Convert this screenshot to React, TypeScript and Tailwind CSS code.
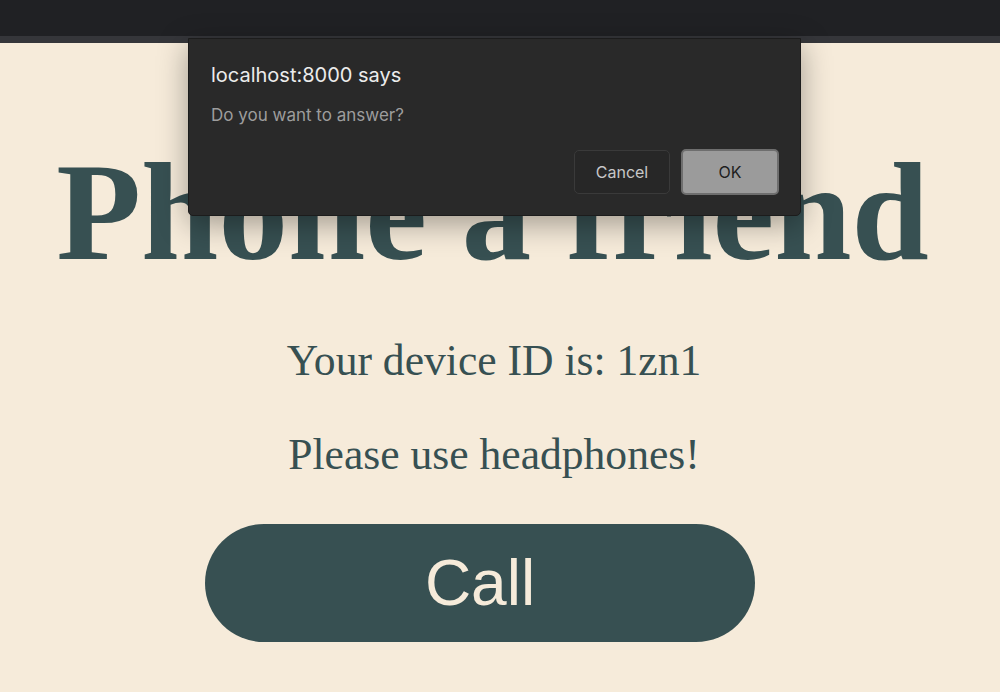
import React from "react";

export default function App() {
  return (
    <div className="relative w-[1000px] h-[692px] overflow-hidden bg-[#f6ebda]">
      <div className="h-[36px] bg-[#202124]" />
      <div className="h-[7px] bg-[#35363a]" />
      <div className="flex flex-col items-center text-[#375052]">
        <h1
          className="mt-[94px] mr-[15px] text-[139px] leading-[150px] font-bold whitespace-nowrap"
          style={{ fontFamily: '"Liberation Serif", serif' }}
        >
          Phone a friend
        </h1>
        <p
          className="mt-[48px] mr-[12px] text-[43.6px] leading-[50px] whitespace-nowrap"
          style={{ fontFamily: '"Liberation Serif", serif' }}
        >
          Your device ID is: 1zn1
        </p>
        <p
          className="mt-[44px] mr-[12px] text-[43.6px] leading-[50px] whitespace-nowrap"
          style={{ fontFamily: '"Liberation Serif", serif' }}
        >
          Please use headphones!
        </p>
        <button
          className="mt-[45px] mr-[40px] w-[550px] h-[118px] rounded-full bg-[#375052] text-[#f6ebda] text-[64px]"
          style={{ fontFamily: '"Liberation Sans", Arial, sans-serif' }}
        >
          Call
        </button>
      </div>

      <div
        className="absolute left-[188px] top-[38px] w-[613px] h-[178px] bg-[#292929] border border-[#1c1c1c] rounded-b-[5px] shadow-[0_8px_30px_rgba(0,0,0,0.35)] pl-[22px] pr-[21px] pt-[24px]"
        style={{ fontFamily: 'Inter, "Noto Sans", sans-serif' }}
      >
        <div className="text-[20px] leading-[24px] text-[#ececec] whitespace-nowrap">localhost:8000 says</div>
        <div className="mt-[18px] text-[17px] leading-[20px] text-[#9d9d9d] whitespace-nowrap">Do you want to answer?</div>
        <div className="mt-[24px] flex justify-end items-center gap-[11px]">
          <button className="w-[96px] h-[44px] rounded-[5px] border border-[#3a3a3a] bg-[#272727] text-[16px] text-[#c8c8c8]">
            Cancel
          </button>
          <button className="w-[98px] h-[46px] rounded-[5px] border-2 border-[#6e6e6e] bg-[#9b9b9b] text-[16px] text-[#1e1e1e]">
            OK
          </button>
        </div>
      </div>
    </div>
  );
}
